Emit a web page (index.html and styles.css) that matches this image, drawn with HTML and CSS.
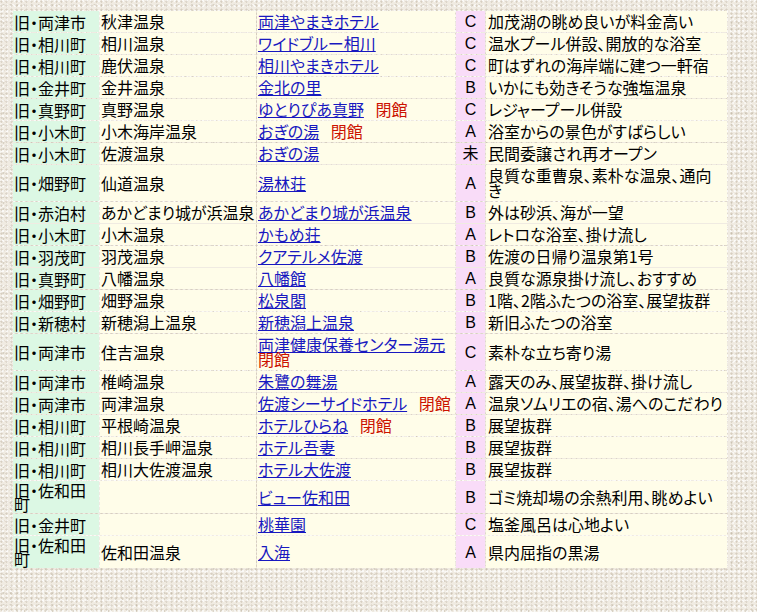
FILE: index.html
```html
<!DOCTYPE html>
<html lang="ja">
<head>
<meta charset="utf-8">
<title>佐渡の温泉</title>
<link rel="stylesheet" href="styles.css">
</head>
<body>
<table class="onsen">
<colgroup>
<col class="c-area"><col class="c-name"><col class="c-hotel"><col class="c-rank"><col class="c-note">
</colgroup>
<tbody>
<tr><td class="area">旧・両津市</td><td class="name">秋津温泉</td><td class="hotel"><a href="#">両津やまきホテル</a></td><td class="rank">C</td><td class="note">加茂湖の眺め良いが料金高い</td></tr>
<tr><td class="area">旧・相川町</td><td class="name">相川温泉</td><td class="hotel"><a href="#">ワイドブルー相川</a></td><td class="rank">C</td><td class="note">温水プール併設、開放的な浴室</td></tr>
<tr><td class="area">旧・相川町</td><td class="name">鹿伏温泉</td><td class="hotel"><a href="#">相川やまきホテル</a></td><td class="rank">C</td><td class="note">町はずれの海岸端に建つ一軒宿</td></tr>
<tr><td class="area">旧・金井町</td><td class="name">金井温泉</td><td class="hotel"><a href="#">金北の里</a></td><td class="rank">B</td><td class="note">いかにも効きそうな強塩温泉</td></tr>
<tr><td class="area">旧・真野町</td><td class="name">真野温泉</td><td class="hotel"><a href="#">ゆとりぴあ真野</a> <span class="closed">閉館</span></td><td class="rank">C</td><td class="note">レジャープール併設</td></tr>
<tr><td class="area">旧・小木町</td><td class="name">小木海岸温泉</td><td class="hotel"><a href="#">おぎの湯</a> <span class="closed">閉館</span></td><td class="rank">A</td><td class="note">浴室からの景色がすばらしい</td></tr>
<tr><td class="area">旧・小木町</td><td class="name">佐渡温泉</td><td class="hotel"><a href="#">おぎの湯</a></td><td class="rank">未</td><td class="note">民間委譲され再オープン</td></tr>
<tr><td class="area">旧・畑野町</td><td class="name">仙道温泉</td><td class="hotel"><a href="#">湯林荘</a></td><td class="rank">A</td><td class="note">良質な重曹泉、素朴な温泉、通向き</td></tr>
<tr><td class="area">旧・赤泊村</td><td class="name">あかどまり城が浜温泉</td><td class="hotel"><a href="#">あかどまり城が浜温泉</a></td><td class="rank">B</td><td class="note">外は砂浜、海が一望</td></tr>
<tr><td class="area">旧・小木町</td><td class="name">小木温泉</td><td class="hotel"><a href="#">かもめ荘</a></td><td class="rank">A</td><td class="note">レトロな浴室、掛け流し</td></tr>
<tr><td class="area">旧・羽茂町</td><td class="name">羽茂温泉</td><td class="hotel"><a href="#">クアテルメ佐渡</a></td><td class="rank">B</td><td class="note">佐渡の日帰り温泉第1号</td></tr>
<tr><td class="area">旧・真野町</td><td class="name">八幡温泉</td><td class="hotel"><a href="#">八幡館</a></td><td class="rank">A</td><td class="note">良質な源泉掛け流し、おすすめ</td></tr>
<tr><td class="area">旧・畑野町</td><td class="name">畑野温泉</td><td class="hotel"><a href="#">松泉閣</a></td><td class="rank">B</td><td class="note">1階、2階ふたつの浴室、展望抜群</td></tr>
<tr><td class="area">旧・新穂村</td><td class="name">新穂潟上温泉</td><td class="hotel"><a href="#">新穂潟上温泉</a></td><td class="rank">B</td><td class="note">新旧ふたつの浴室</td></tr>
<tr><td class="area">旧・両津市</td><td class="name">住吉温泉</td><td class="hotel"><a href="#">両津健康保養センター湯元</a> <span class="closed">閉館</span></td><td class="rank">C</td><td class="note">素朴な立ち寄り湯</td></tr>
<tr><td class="area">旧・両津市</td><td class="name">椎崎温泉</td><td class="hotel"><a href="#">朱鷺の舞湯</a></td><td class="rank">A</td><td class="note">露天のみ、展望抜群、掛け流し</td></tr>
<tr><td class="area">旧・両津市</td><td class="name">両津温泉</td><td class="hotel"><a href="#">佐渡シーサイドホテル</a> <span class="closed">閉館</span></td><td class="rank">A</td><td class="note">温泉ソムリエの宿、湯へのこだわり</td></tr>
<tr><td class="area">旧・相川町</td><td class="name">平根崎温泉</td><td class="hotel"><a href="#">ホテルひらね</a> <span class="closed">閉館</span></td><td class="rank">B</td><td class="note">展望抜群</td></tr>
<tr><td class="area">旧・相川町</td><td class="name">相川長手岬温泉</td><td class="hotel"><a href="#">ホテル吾妻</a></td><td class="rank">B</td><td class="note">展望抜群</td></tr>
<tr><td class="area">旧・相川町</td><td class="name">相川大佐渡温泉</td><td class="hotel"><a href="#">ホテル大佐渡</a></td><td class="rank">B</td><td class="note">展望抜群</td></tr>
<tr><td class="area">旧・佐和田町</td><td class="name"></td><td class="hotel"><a href="#">ビュー佐和田</a></td><td class="rank">B</td><td class="note">ゴミ焼却場の余熱利用、眺めよい</td></tr>
<tr><td class="area">旧・金井町</td><td class="name"></td><td class="hotel"><a href="#">桃華園</a></td><td class="rank">C</td><td class="note">塩釜風呂は心地よい</td></tr>
<tr><td class="area">旧・佐和田町</td><td class="name">佐和田温泉</td><td class="hotel"><a href="#">入海</a></td><td class="rank">A</td><td class="note">県内屈指の黒湯</td></tr>
</tbody>
</table>
</body>
</html>
```

FILE: styles.css
```css
html, body {
  margin: 0;
  padding: 0;
}
body {
  background-color: #f0ebe2;
  background-image:
    radial-gradient(circle at 30% 40%, rgba(185,172,152,0.45) 0.8px, transparent 1.4px),
    radial-gradient(circle at 70% 20%, rgba(255,255,255,0.75) 0.8px, transparent 1.5px),
    radial-gradient(circle at 50% 80%, rgba(170,160,140,0.35) 0.7px, transparent 1.3px),
    radial-gradient(circle at 20% 70%, rgba(255,255,255,0.6) 0.7px, transparent 1.4px);
  background-size: 5px 4px, 4px 5px, 7px 6px, 6px 7px;
  font-family: "Noto Sans CJK JP", "Noto Sans", sans-serif;
  font-size: 16px;
  color: #000;
  padding: 10px 0 0 12px;
  min-height: 612px;
  box-sizing: border-box;
}
.onsen {
  border-collapse: separate;
  border-spacing: 1px;
  table-layout: fixed;
  width: 716px;
  font-feature-settings: "palt" 1;
}
.c-area { width: 86px; }
.c-name { width: 156px; }
.c-hotel { width: 198px; }
.c-rank { width: 29px; }
.c-note { width: 241px; }
.onsen td {
  padding: 3px 0 3px 1px;
  line-height: 15px;
  vertical-align: middle;
  background: #fffde9;
}
.onsen td.area {
  background: #dcf8e4;
  line-height: 14px;
  padding-top: 2px;
  padding-bottom: 2px;
}
.onsen td.rank {
  background: #f9dcf8;
  text-align: center;
  padding-left: 0;
  font-family: "Liberation Sans", "Noto Sans CJK JP", sans-serif;
}
.onsen td.note {
  padding-left: 2px;
  padding-right: 3px;
}
.hotel {
  word-spacing: 8px;
}
.hotel a {
  color: #1818c0;
  text-decoration: underline;
  text-underline-offset: 1px;
  word-spacing: normal;
}
.closed {
  color: #cc1100;
  word-spacing: normal;
}
```
